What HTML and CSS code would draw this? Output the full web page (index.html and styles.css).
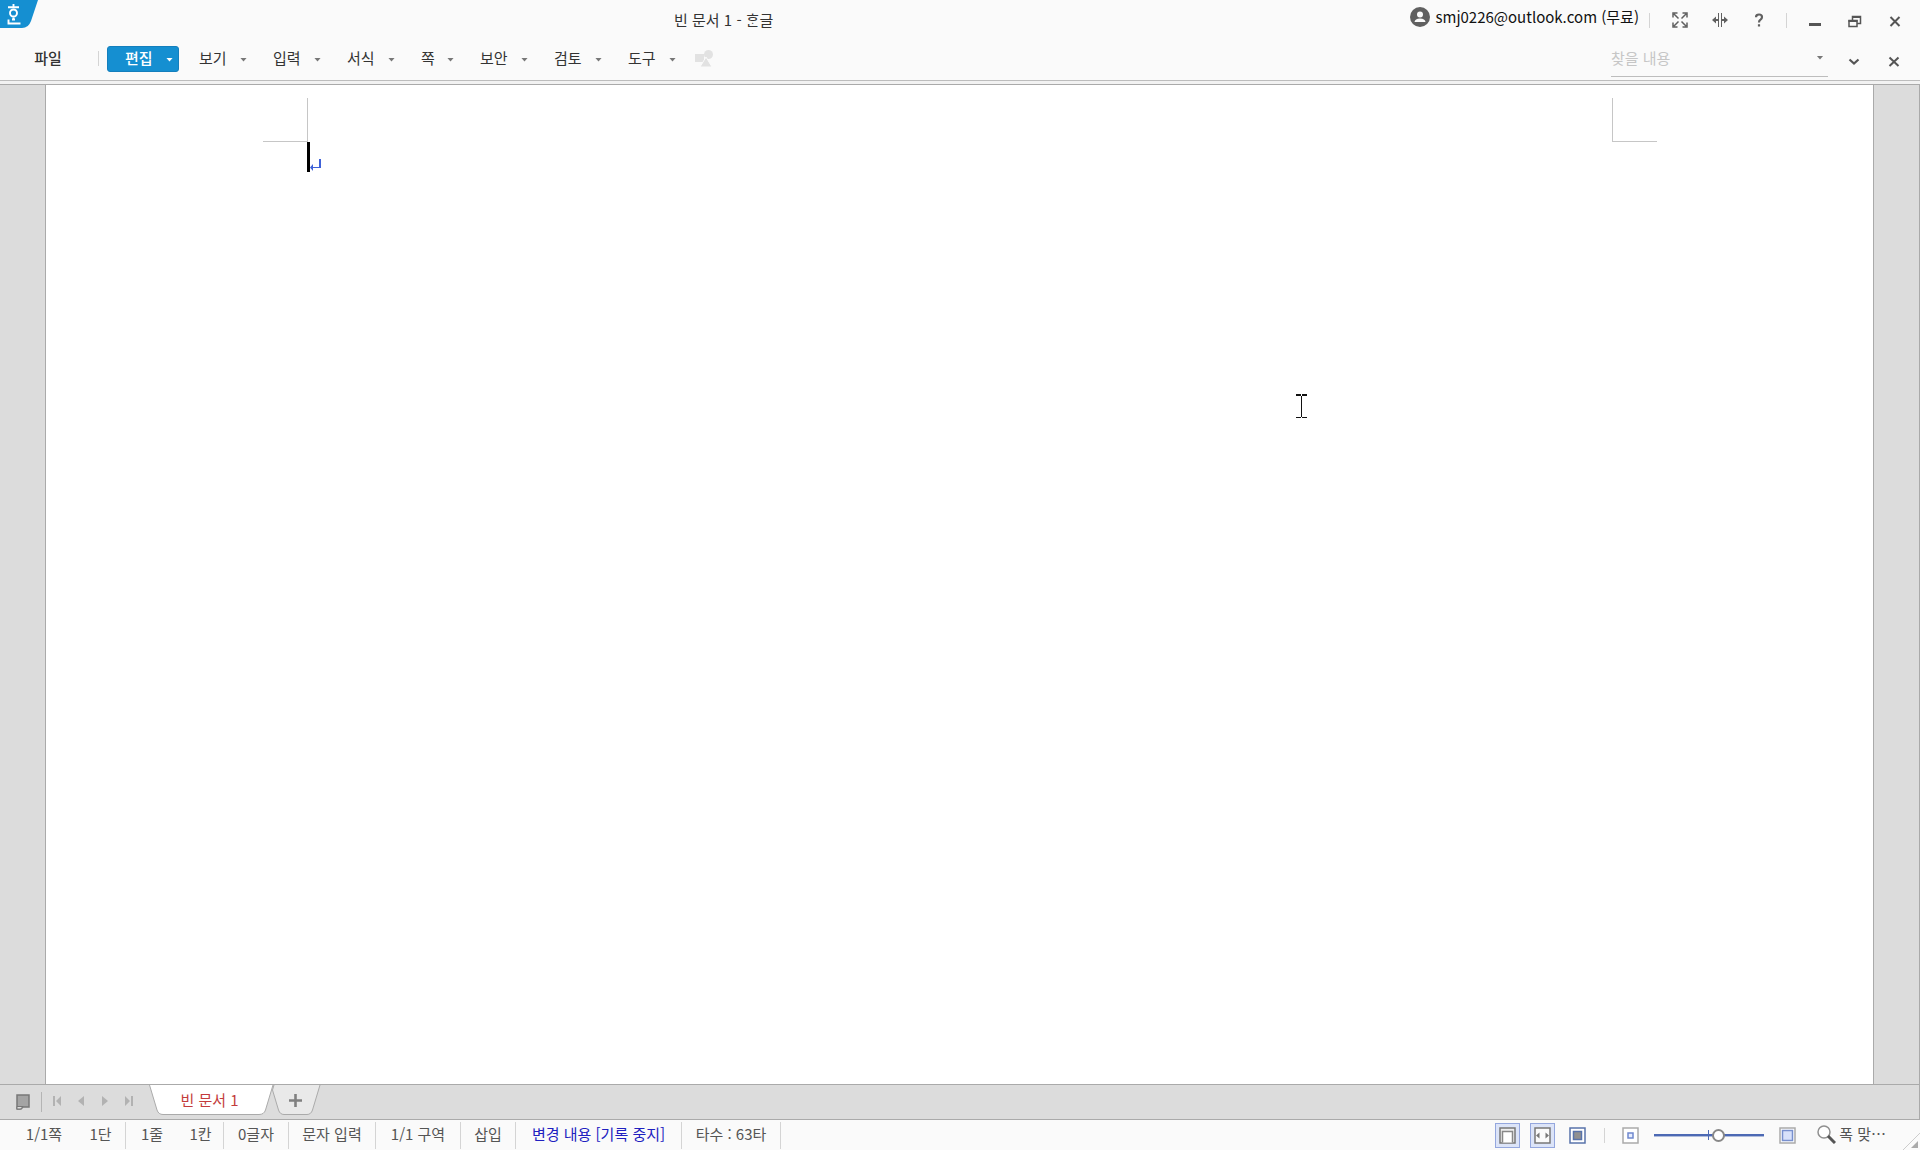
FILE: index.html
```html
<!DOCTYPE html>
<html lang="ko">
<head>
<meta charset="utf-8">
<title>빈 문서 1 - ᄒᆞᆫ글</title>
<link rel="stylesheet" href="styles.css">
</head>
<body>
<div class="app">
  <header class="header">
    <div class="titlebar">
      <svg class="logo" width="38" height="28" viewBox="0 0 38 28" aria-hidden="true">
        <path d="M0 0H38L31 21Q28.500 28 22 28H0Z" fill="#158fd1"/>
        <g fill="none" stroke="#fff" stroke-width="1.900">
          <path d="M13.500 4V7M8 7.200H19"/>
          <circle cx="13.500" cy="13" r="3.500"/>
          <path d="M13.500 17.500V20.500M8.500 19.500V23.500H20.500M12 19.500H15"/>
        </g>
      </svg>
      <h1 class="title">빈 문서 1 - ᄒᆞᆫ글</h1>
      <button class="account">
        <svg width="20" height="20" viewBox="0 0 20 20" aria-hidden="true"><circle cx="10" cy="10" r="10" fill="#606060"/><circle cx="10" cy="7.500" r="3" fill="#fafafa"/><path d="M4.500 15Q5 11.500 10 11.500T15.500 15Z" fill="#fafafa"/></svg>
        <span>smj0226@outlook.com (무료)</span>
      </button>
      <span class="rule"></span>
      <div class="tools">
        <button class="tool" aria-label="전체 화면"><svg width="16" height="16" viewBox="0 0 16 16" fill="none" stroke="#606060" stroke-width="1.500"><path d="M1 5.500V1H5.500M10.500 1H15V5.500M15 10.500V15H10.500M5.500 15H1V10.500M2 2L6.500 6.500M14 2L9.500 6.500M2 14L6.500 9.500M14 14L9.500 9.500"/></svg></button>
        <button class="tool" aria-label="창 나누기"><svg width="16" height="16" viewBox="0 0 16 16" fill="#606060"><path d="M6 1H7V15H6ZM9 1H10V15H9ZM0 8L4 4.500V7H6V9H4V11.500ZM16 8L12 4.500V7H10V9H12V11.500Z"/></svg></button>
        <button class="tool" aria-label="도움말"><svg width="16" height="16" viewBox="0 0 16 16" fill="none" stroke="#606060" stroke-width="2.200"><path d="M4 5.200Q4 2.500 7 2.500T10 5Q10 6.500 8.500 7.600Q7 8.600 7 10.500M7 12.200V14.500"/></svg></button>
      </div>
      <span class="rule"></span>
      <div class="tools">
        <button class="tool low" aria-label="최소화"><svg width="16" height="16" viewBox="0 0 16 16"><path d="M2 9H14V12H2Z" fill="#555"/></svg></button>
        <button class="tool low" aria-label="이전 크기로 복원"><svg width="16" height="16" viewBox="0 0 16 16" fill="none" stroke="#555"><path d="M5.500 6V2.500H13.500V9.500H10.500M2 6.500H10V12.500H2Z" stroke-width="1.500"/><path d="M5 3H14M1.500 7H10.500" stroke-width="2"/></svg></button>
        <button class="tool low" aria-label="닫기"><svg width="16" height="16" viewBox="0 0 16 16"><path d="M3.500 3L12.500 12M12.500 3L3.500 12" stroke="#555" stroke-width="2"/></svg></button>
      </div>
    </div>
    <div class="menubar">
      <nav class="menu">
        <button class="file">파일</button>
        <span class="rule"></span>
        <button class="item active"><span>편집</span><i></i></button>
        <button class="item"><span>보기</span><i></i></button>
        <button class="item"><span>입력</span><i></i></button>
        <button class="item"><span>서식</span><i></i></button>
        <button class="item short"><span>쪽</span><i></i></button>
        <button class="item"><span>보안</span><i></i></button>
        <button class="item"><span>검토</span><i></i></button>
        <button class="item"><span>도구</span><i></i></button>
        <button class="shapes" aria-label="도형" disabled><svg width="18" height="17" viewBox="0 0 18 17"><g fill="#e2e2e2"><rect y="4" width="9" height="8"/><circle cx="13.500" cy="4.500" r="4.500"/></g><path d="M11 7L17 17H5Z" fill="#e2e2e2" stroke="#fafafa"/></svg></button>
      </nav>
      <div class="search">
        <input type="text" placeholder="찾을 내용" aria-label="찾을 내용">
        <button class="drop" aria-label="찾기 목록"><i></i></button>
      </div>
      <div class="tools">
        <button class="tool low" aria-label="메뉴 접기"><svg width="16" height="16" viewBox="0 0 16 16"><path d="M3.500 5.500L8 9.500L12.500 5.500" fill="none" stroke="#555" stroke-width="2.200"/></svg></button>
        <button class="tool low" aria-label="문서 닫기"><svg width="16" height="16" viewBox="0 0 16 16"><path d="M3.500 3.500L12.500 12M12.500 3.500L3.500 12" stroke="#555" stroke-width="2"/></svg></button>
      </div>
    </div>
  </header>

  <main class="workspace">
    <section class="page">
      <div class="margins"><span class="corner left"></span><span class="corner right"></span></div>
      <div class="line">
        <span class="caret"></span>
        <svg width="12" height="14" viewBox="0 0 12 14" aria-hidden="true"><path d="M9 1H11V10H9ZM2 9H9V10H2ZM0 9.500L3 6V13Z" fill="#3f62d8"/></svg>
      </div>
      <svg class="pointer" width="11" height="24" viewBox="0 0 11 24" aria-hidden="true"><path d="M0 0H5V2H0ZM6 0H11V2H6ZM5 2H6V23H5ZM0 23H5V24H0ZM6 23H11V24H6Z" fill="#111"/></svg>
    </section>
  </main>

  <div class="tabbar">
    <button class="note" aria-label="탭 목록"><svg width="14" height="16" viewBox="0 0 14 16"><path d="M1 1H13V13H7L5 15H1Z" fill="#a4a4a4" stroke="#777" stroke-width="1.500"/><path d="M1 12.500H7L4.500 15H1Z" fill="#ddd" stroke="#777"/></svg></button>
    <span class="rule"></span>
    <div class="pager">
      <button aria-label="처음"><svg width="10" height="10" viewBox="0 0 10 10"><path d="M1 0H3V10H1ZM9 0V10L4 5Z"/></svg></button>
      <button aria-label="이전"><svg width="10" height="10" viewBox="0 0 10 10"><path d="M8 0V10L2 5Z"/></svg></button>
      <button aria-label="다음"><svg width="10" height="10" viewBox="0 0 10 10"><path d="M2 0V10L8 5Z"/></svg></button>
      <button aria-label="마지막"><svg width="10" height="10" viewBox="0 0 10 10"><path d="M7 0H9V10H7ZM1 0V10L6 5Z"/></svg></button>
    </div>
    <div class="tabs">
      <button class="tab"><svg width="125" height="30" viewBox="0 0 125 30" aria-hidden="true"><path d="M.5 0L8 25Q9.500 29.500 14 29.500H110Q115 29.500 116.500 25L124 0" fill="#fff" stroke="#aaa"/></svg><span>빈 문서 1</span></button>
      <button class="add" aria-label="새 탭"><svg width="50" height="30" viewBox="0 0 50 30"><path d="M3 0L1.500 5L7.500 25Q9 29.500 13 29.500H36Q40 29.500 41.500 25L49 0" fill="#e9e9e9" stroke="#aaa"/><path d="M24.500 9V22M18 15.500H31" stroke="#808080" stroke-width="2.600"/></svg></button>
    </div>
  </div>

  <footer class="status">
    <div class="cells">
      <span class="plain">1/1쪽</span><span>1단</span><span class="plain">1줄</span><span>1칸</span><span>0글자</span><span>문자 입력</span><span>1/1 구역</span><span>삽입</span><span class="track">변경 내용 [기록 중지]</span><span>타수 : 63타</span>
    </div>
    <div class="views">
      <button class="view on" aria-label="쪽 윤곽"><svg width="17" height="17" viewBox="0 0 17 17"><rect x="1" y="1" width="15" height="15" fill="#eee" stroke="#777" stroke-width="1.500"/><path d="M3.500 15.500V4.500H13.500V15.500" fill="#fff" stroke="#888" stroke-width="1.500"/></svg></button>
      <button class="view on" aria-label="폭 맞춤"><svg width="17" height="17" viewBox="0 0 17 17"><rect x="1" y="1" width="15" height="15" fill="#fafafa" stroke="#777" stroke-width="1.500"/><path d="M2 8.500L5.500 5.500V11.500ZM15 8.500L11.500 5.500V11.500Z" fill="#777"/></svg></button>
      <button class="view" aria-label="쪽 맞춤"><svg width="17" height="17" viewBox="0 0 17 17"><rect x="1" y="1" width="15" height="15" fill="#fff" stroke="#5873aa" stroke-width="1.500"/><rect x="4.500" y="4.500" width="8" height="8" fill="#909090" stroke="#5873aa" stroke-width="1.500"/></svg></button>
    </div>
    <span class="rule"></span>
    <div class="zoom">
      <button aria-label="축소"><svg width="17" height="17" viewBox="0 0 17 17"><rect x="1" y="1" width="15" height="15" fill="#fff" stroke="#aaa" stroke-width="1.500"/><rect x="6" y="6" width="5" height="5" fill="#e8efff" stroke="#6f88ce" stroke-width="1.500"/></svg></button>
      <input type="range" min="0" max="100" value="60" aria-label="확대/축소">
      <button aria-label="확대"><svg width="17" height="17" viewBox="0 0 17 17"><rect x="1" y="1" width="15" height="15" fill="#fff" stroke="#aaa" stroke-width="1.500"/><rect x="3.500" y="3.500" width="10" height="10" fill="#d8e1fa" stroke="#7890ce" stroke-width="1.500"/></svg></button>
    </div>
    <button class="fit"><svg width="19" height="19" viewBox="0 0 19 19"><circle cx="7" cy="7" r="6" fill="#fff" stroke="#909090" stroke-width="1.500"/><path d="M11 11L18 18" stroke="#555" stroke-width="3"/></svg><span>폭 맞⋯</span></button>
    <svg class="grip" width="17" height="17" viewBox="0 0 17 17" aria-hidden="true"><path d="M0 17L17 0" stroke="#ccc"/><path d="M8 15L15 8V15Z" fill="#aaa"/></svg>
  </footer>
</div>
</body>
</html>
```
FILE: styles.css
```css
* { box-sizing: border-box; }
body {
  margin: 0;
  background: #fafafa;
  color: #333;
  font: 15px/20px "Noto Sans CJK KR", sans-serif;
}
button {
  display: flex;
  align-items: center;
  justify-content: center;
  margin: 0;
  padding: 0;
  border: 0;
  background: none;
  color: inherit;
  font: inherit;
}
svg { display: block; flex: none; }
.app { display: flex; flex-direction: column; min-height: 100vh; }
.rule { flex: none; width: 1px; height: 15px; background: #d4d4d4; }

/* header */
.header {
  height: 85px;
  background: #fafafa;
  border-bottom: 1px solid #aaa;
}
.titlebar { display: flex; align-items: center; height: 40px; }
.logo { align-self: flex-start; }
.title {
  flex: 1;
  margin: 0;
  font-size: 15px;
  font-weight: 400;
  text-align: center;
}
.account {
  gap: 6px;
  height: 34px;
  align-self: flex-start;
  margin-right: 10px;
  color: #111;
}
.tools { display: flex; }
.titlebar .tools { margin-left: 10px; }
.titlebar .tools:last-child { margin: 0 5px 0 8px; }
.titlebar .tools + .rule { margin-left: 6px; }
.tool { width: 40px; height: 40px; }
.tool.low { padding-top: 4px; }
.menubar {
  display: flex;
  height: 41px;
  padding-right: 6px;
  border-bottom: 1px solid #bdbdbd;
}
.header::after { content: ""; display: block; height: 3px; background: #f2f2f2; }
.menu { display: flex; flex: 1; align-items: center; padding-bottom: 3px; }
.file { width: 96px; height: 26px; padding-bottom: 2px; font-weight: 500; }
.menu .rule { margin: 0 8px 0 2px; }
.item {
  justify-content: flex-start;
  width: 72px;
  height: 26px;
  margin-right: 2px;
  padding-left: 18px;
  border-radius: 3px;
}
.item span { width: 41px; padding-bottom: 2px; text-align: left; }
.item.short { width: 57px; }
.item.short span { width: 26px; }
.item i, .drop i {
  width: 7px;
  height: 4px;
  background: #777;
  clip-path: polygon(0 0, 100% 0, 50% 100%);
}
.item i { margin-top: 2px; }
.item.active { background: #158fd1; border: 1px solid #147fbd; padding-left: 17px; color: #fff; font-weight: 500; }
.item.active i { background: #fff; }
.shapes { margin-left: 11px; }
.search {
  display: flex;
  width: 217px;
  height: 37px;
  margin-right: 6px;
  border-bottom: 1px solid #bdbdbd;
}
.search input {
  flex: 1;
  min-width: 0;
  padding: 0;
  border: 0;
  outline: 0;
  background: none;
  font: inherit;
}
.search input::placeholder { color: #c6c6c6; opacity: 1; }
.drop { width: 16px; padding-bottom: 1px; }

/* document */
.workspace {
  display: flex;
  flex: 1;
  padding: 0 45px;
  background: #dcdcdc;
  border-right: 1px solid #aaa;
}
.page {
  position: relative;
  flex: 1;
  padding: 13px 216px 0 217px;
  background: #fff;
  border: solid #aaa;
  border-width: 0 1px;
}
.margins { display: flex; justify-content: space-between; }
.corner { width: 45px; height: 44px; border-bottom: 1px solid #c6c6c6; }
.corner.left { border-right: 1px solid #c6c6c6; }
.corner.right { border-left: 1px solid #c6c6c6; }
.line { display: flex; align-items: flex-end; height: 30px; padding-left: 44px; }
.caret { width: 3px; height: 30px; background: #000; }
.pointer { position: absolute; left: 1250px; top: 309px; }

/* document tabs */
.tabbar {
  display: flex;
  align-items: center;
  height: 36px;
  background: #dcdcdc;
  border: solid #aaa;
  border-width: 1px 1px 1px 0;
}
.note { width: 41px; padding-left: 5px; }
.tabbar .rule { height: 20px; background: #b4b4b4; }
.pager { display: flex; padding: 0 4px 2px 3px; }
.pager button { width: 24px; height: 30px; }
.pager svg { fill: #b2b2b2; }
.tabs { display: flex; align-self: flex-start; padding-left: 4px; }
.tab { display: grid; place-items: center; color: #c33c3c; font-weight: 400; }
.tab svg, .tab span { grid-area: 1 / 1; }
.tab span { padding-right: 4px; }
.add { margin-left: -3px; }

/* status bar */
.status { display: flex; align-items: center; height: 30px; color: #555; }
.cells {
  display: grid;
  grid-template-columns: 64px 50px 52px 46px 65px 87px 85px 55px 166px 99px;
  flex: 1;
  padding-left: 12px;
}
.cells span {
  height: 27px;
  border-right: 1px solid #d4d4d4;
  line-height: 24px;
  text-align: center;
  white-space: nowrap;
}
.cells .plain { border: 0; }
.cells .track { color: #2020c0; }
.views { display: flex; gap: 10px; margin-right: 14px; }
.view { width: 25px; height: 25px; border: 1px solid transparent; }
.view.on { background: #dce4f8; border-color: #94a7de; }
.zoom { display: flex; align-items: center; gap: 15px; margin: 0 21px 0 17px; }
.zoom input {
  -webkit-appearance: none;
  appearance: none;
  width: 110px;
  height: 16px;
  margin: 0;
  background:
    linear-gradient(#4c69b4, #4c69b4) 54px 3px / 1px 10px no-repeat,
    linear-gradient(#4c69b4, #4c69b4) 0 7px / 100% 2px no-repeat,
    linear-gradient(#b0bcdc, #b0bcdc) 0 9px / 100% 1px no-repeat;
}
.zoom input::-webkit-slider-thumb {
  -webkit-appearance: none;
  width: 13px;
  height: 13px;
  border: 2px solid #888;
  border-radius: 50%;
  background: #fff;
}
.fit { gap: 3px; margin-right: 17px; padding-bottom: 2px; }
.grip { align-self: flex-end; }
```
